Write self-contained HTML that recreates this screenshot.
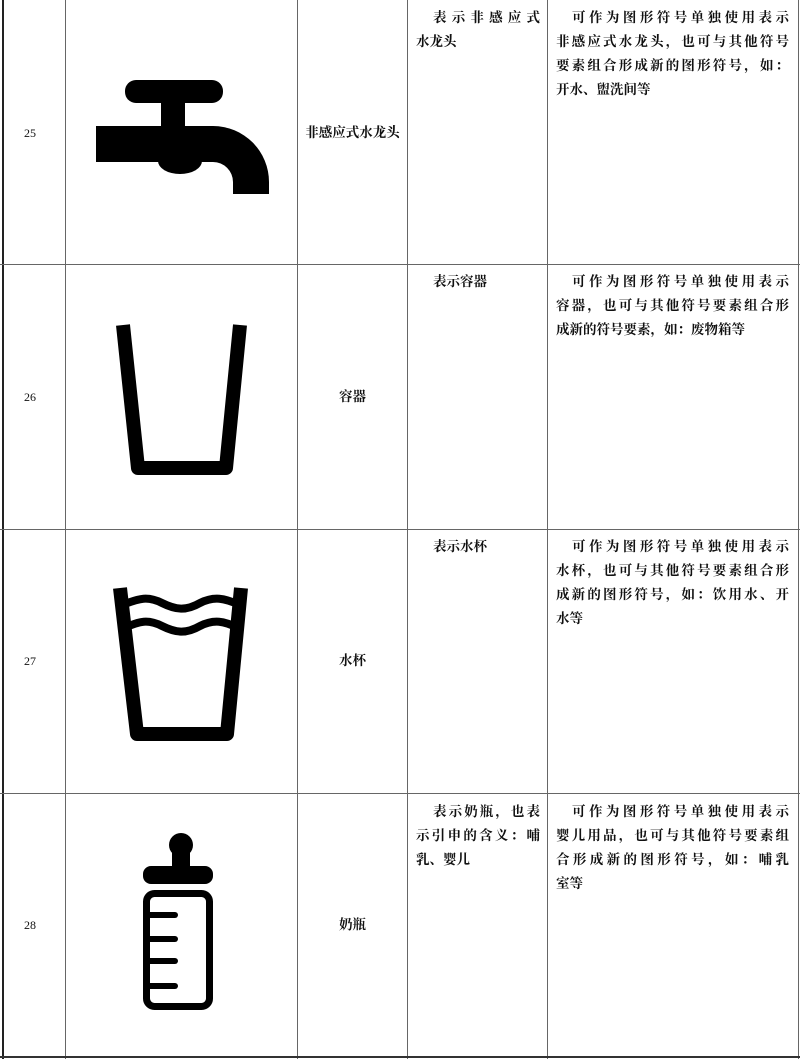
<!DOCTYPE html>
<html><head><meta charset="utf-8"><style>
body{margin:0;width:800px;height:1059px;background:#fff;position:relative;overflow:hidden;font-family:"Liberation Serif","Noto Serif CJK SC",serif;color:#111;}
.v,.h{position:absolute;background:#666;}
.t{position:absolute;font-size:13.5px;line-height:24px;font-weight:700;}
.t div{text-align:justify;text-align-last:justify;white-space:nowrap;}
.t div.l{text-align-last:left;}
.n{font-weight:400;font-size:12px;}
</style></head><body>
<div class="v" style="left:2px;top:0;width:2px;height:1059px;background:#222"></div>
<div class="v" style="left:65px;top:0;width:1px;height:1059px"></div>
<div class="v" style="left:297px;top:0;width:1px;height:1059px"></div>
<div class="v" style="left:407px;top:0;width:1px;height:1059px"></div>
<div class="v" style="left:547px;top:0;width:1px;height:1059px"></div>
<div class="v" style="left:798px;top:0;width:1px;height:1059px"></div>
<div class="h" style="left:0;top:264px;width:800px;height:1px"></div>
<div class="h" style="left:0;top:529px;width:800px;height:1px"></div>
<div class="h" style="left:0;top:793px;width:800px;height:1px"></div>
<div class="h" style="left:0;top:1056px;width:800px;height:2px;background:#333"></div>

<div class="t n" style="left:24px;top:121px">25</div>
<div class="t n" style="left:24px;top:385px">26</div>
<div class="t n" style="left:24px;top:649px">27</div>
<div class="t n" style="left:24px;top:913px">28</div>

<div class="t" style="left:298px;width:109px;top:121px;text-align:center">非感应式水龙头</div>
<div class="t" style="left:298px;width:109px;top:385px;text-align:center">容器</div>
<div class="t" style="left:298px;width:109px;top:649px;text-align:center">水杯</div>
<div class="t" style="left:298px;width:109px;top:913px;text-align:center">奶瓶</div>

<div class="t" style="left:416px;width:124px;top:6px"><div style="padding-left:17px">表示非感应式</div><div class="l">水龙头</div></div>
<div class="t" style="left:416px;width:124px;top:270px"><div class="l" style="padding-left:17px">表示容器</div></div>
<div class="t" style="left:416px;width:124px;top:535px"><div class="l" style="padding-left:17px">表示水杯</div></div>
<div class="t" style="left:416px;width:124px;top:800px"><div style="padding-left:17px">表示奶瓶，也表</div><div>示引申的含义：哺</div><div class="l">乳、婴儿</div></div>

<div class="t" style="left:556px;width:233px;top:6px"><div style="padding-left:16px">可作为图形符号单独使用表示</div><div>非感应式水龙头，也可与其他符号</div><div>要素组合形成新的图形符号，如：</div><div class="l">开水、盥洗间等</div></div>
<div class="t" style="left:556px;width:233px;top:270px"><div style="padding-left:16px">可作为图形符号单独使用表示</div><div>容器，也可与其他符号要素组合形</div><div class="l">成新的符号要素，如：废物箱等</div></div>
<div class="t" style="left:556px;width:233px;top:535px"><div style="padding-left:16px">可作为图形符号单独使用表示</div><div>水杯，也可与其他符号要素组合形</div><div>成新的图形符号，如：饮用水、开</div><div class="l">水等</div></div>
<div class="t" style="left:556px;width:233px;top:800px"><div style="padding-left:16px">可作为图形符号单独使用表示</div><div>婴儿用品，也可与其他符号要素组</div><div>合形成新的图形符号，如：哺乳</div><div class="l">室等</div></div>

<svg width="800" height="1059" style="position:absolute;left:0;top:0">
<rect x="125" y="80" width="98" height="23" rx="11" fill="#000"/>
<rect x="161" y="100" width="24" height="30" fill="#000"/>
<path d="M96 126 H213 A56 56 0 0 1 269 182 V194 H233 V182 A20 20 0 0 0 213 162 H96 Z" fill="#000"/>
<ellipse cx="180" cy="161" rx="22" ry="13" fill="#000"/>
<path d="M123 325 L138 468 H226 L240 325" fill="none" stroke="#000" stroke-width="14" stroke-linejoin="round"/>
<path d="M120 588 L137 734 H227 L241 588" fill="none" stroke="#000" stroke-width="14" stroke-linejoin="round"/>
<path d="M122 605 C140 598 148 596 162 603 C176 610 186 611 200 603 C214 596 224 598 240 605" fill="none" stroke="#000" stroke-width="8"/>
<path d="M124 628 C140 621 148 619 162 626 C176 633 186 634 200 626 C214 619 224 621 238 628" fill="none" stroke="#000" stroke-width="8"/>
<circle cx="181" cy="845" r="12" fill="#000"/>
<rect x="172" y="848" width="18" height="18" fill="#000"/>
<rect x="143" y="866" width="70" height="18" rx="8" fill="#000"/>
<rect x="146.5" y="893.5" width="63" height="113" rx="8" fill="none" stroke="#000" stroke-width="7"/>
<g stroke="#000" stroke-width="6" stroke-linecap="round"><line x1="150" y1="915" x2="175" y2="915"/><line x1="150" y1="939" x2="175" y2="939"/><line x1="150" y1="961" x2="175" y2="961"/><line x1="150" y1="986" x2="175" y2="986"/></g>
</svg>
</body></html>
